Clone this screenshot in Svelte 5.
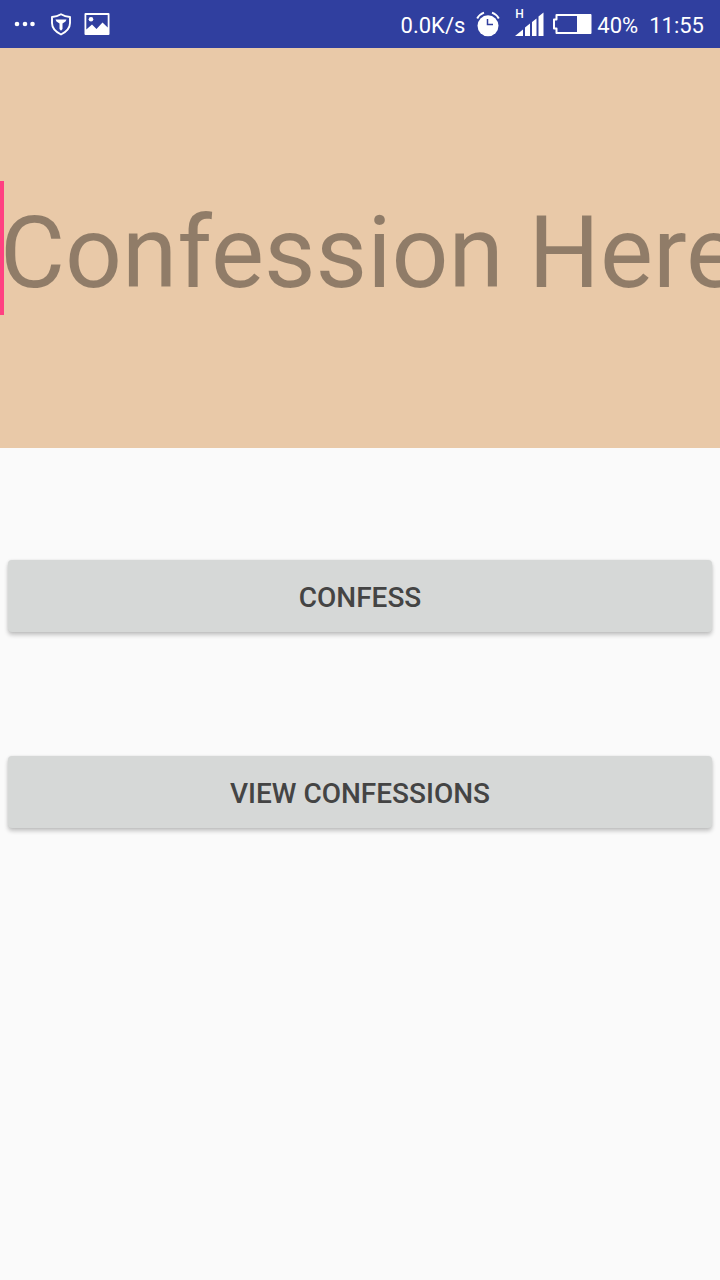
<script>
  let confession = $state('');
</script>

<div class="screen">
  <header class="status">
    <div class="notices">
      <svg width="22" height="24" viewBox="0 0 22 24" fill="#fff" aria-hidden="true">
        <circle cx="3" cy="12" r="2.300" /><circle cx="11" cy="12" r="2.300" /><circle cx="18.500" cy="12" r="2.300" />
      </svg>
      <svg class="shield" width="22" height="24" viewBox="0 0 22 24" aria-hidden="true">
        <path d="M11 2.300 Q15 4.800 20 5 V11 C20 17 16 20 11 22.500 C6 20 2 17 2 11 V5 Q7 4.800 11 2.300 Z" fill="none" stroke="#fff" stroke-width="1.900" stroke-linejoin="round" />
        <path d="M5.500 7.500 H16.500 L15.500 9.500 L12.500 11.500 V17 L11 18.800 L9.500 17 V11.500 L6.500 9.500 Z" fill="#fff" />
      </svg>
      <svg width="26" height="24" viewBox="0 0 26 24" aria-hidden="true">
        <path fill="#fff" fill-rule="evenodd" d="M1.500 1 H24.500 Q25.500 1 25.500 2 V22 Q25.500 23 24.500 23 H1.500 Q.5 23 .5 22 V2 Q.5 1 1.500 1 Z M2.300 3 V17.500 L8 12.500 L12.500 17 L18.500 10.500 L23.700 15.500 V3 Z" />
        <circle cx="7" cy="7.300" r="2.300" fill="#fff" />
      </svg>
    </div>
    <div class="system">
      <span>0.0K/s</span>
      <svg class="alarm" width="24" height="26" viewBox="0 0 24 26" aria-hidden="true">
        <circle cx="12" cy="14.800" r="10.500" fill="#fff" />
        <path d="M1.200 7.500 Q3.500 3.200 8 1.600 M22.800 7.500 Q20.500 3.200 16 1.600" fill="none" stroke="#fff" stroke-width="2" />
        <path d="M11.500 8 V13.500 H17" fill="none" stroke="#303f9f" stroke-width="1.500" />
      </svg>
      <span class="signal">
        <svg width="29" height="24" viewBox="0 0 29 24" fill="#fff" aria-hidden="true">
          <path d="M0 24 L8 17.500 V24 Z M10 15.500 L15 11.500 V24 H10 Z M17 10 L21.500 6.500 V24 H17 Z M23.500 4.500 L28.500 .5 V24 H23.500 Z" />
        </svg>
        <small>H</small>
      </span>
      <svg class="battery" width="40" height="22" viewBox="0 0 40 22" aria-hidden="true">
        <path d="M4.500 2 H38.500 V20 H4.500 V15.500 H2 V6.500 H4.500 Z" fill="none" stroke="#fff" stroke-width="2" stroke-linejoin="round" />
        <path d="M25 1 H39 V21 H25 Z" fill="#fff" />
      </svg>
      <span>40%</span>
      <time class="clock">11:55</time>
    </div>
  </header>

  <main>
    <div class="entry">
      <input type="text" placeholder="Confession Here" aria-label="Confession" bind:value={confession} />
      <span class="caret"></span>
    </div>
    <div class="actions">
      <button type="button">CONFESS</button>
      <button type="button">VIEW CONFESSIONS</button>
    </div>
  </main>
</div>

<style>
  :global(body) {
    margin: 0;
    background: #fafafa;
  }
  .screen {
    min-height: 100vh;
    overflow: hidden;
    font-family: Roboto, sans-serif;
    background: #fafafa;
  }
  .status {
    display: flex;
    justify-content: space-between;
    align-items: center;
    height: 48px;
    padding: 0 16px 0 14px;
    box-sizing: border-box;
    background: #303f9f;
    color: #fff;
    font-size: 22px;
    line-height: 28px;
  }
  .notices {
    display: flex;
    align-items: center;
    gap: 12px;
  }
  .shield {
    margin-left: 2px;
  }
  .system {
    display: flex;
    align-items: center;
    white-space: nowrap;
  }
  .system > span:not(.signal),
  .clock {
    padding-top: 4px;
  }
  .alarm {
    margin-left: 11px;
  }
  .signal {
    position: relative;
    display: flex;
    margin-left: 15px;
  }
  .signal small {
    position: absolute;
    left: 0;
    top: -4px;
    font-size: 12px;
    font-weight: 500;
    line-height: 12px;
  }
  .battery {
    margin: 0 5px 0 8px;
  }
  .clock {
    margin-left: 11px;
  }
  .entry {
    position: relative;
    display: flex;
    align-items: center;
    height: 400px;
    background: #e9c9a8;
  }
  input {
    width: 100%;
    height: 134px;
    padding: 8px 0 0;
    border: 0;
    outline: 0;
    background: transparent;
    color: rgba(0, 0, 0, 0.87);
    font: 400 100px Roboto, sans-serif;
  }
  input::placeholder {
    color: rgba(0, 0, 0, 0.38);
    opacity: 1;
  }
  .caret {
    position: absolute;
    left: 0;
    width: 4px;
    height: 134px;
    background: #ff4081;
  }
  .actions {
    display: flex;
    flex-direction: column;
    gap: 124px;
    padding: 112px 8px;
  }
  button {
    height: 72px;
    padding: 2px 0 0;
    border: 0;
    border-radius: 4px;
    background: #d6d8d7;
    box-shadow: 0 3px 4px rgba(0, 0, 0, 0.22), 0 0 3px rgba(0, 0, 0, 0.08);
    color: #444;
    font: 500 28px Roboto, sans-serif;
  }
</style>
